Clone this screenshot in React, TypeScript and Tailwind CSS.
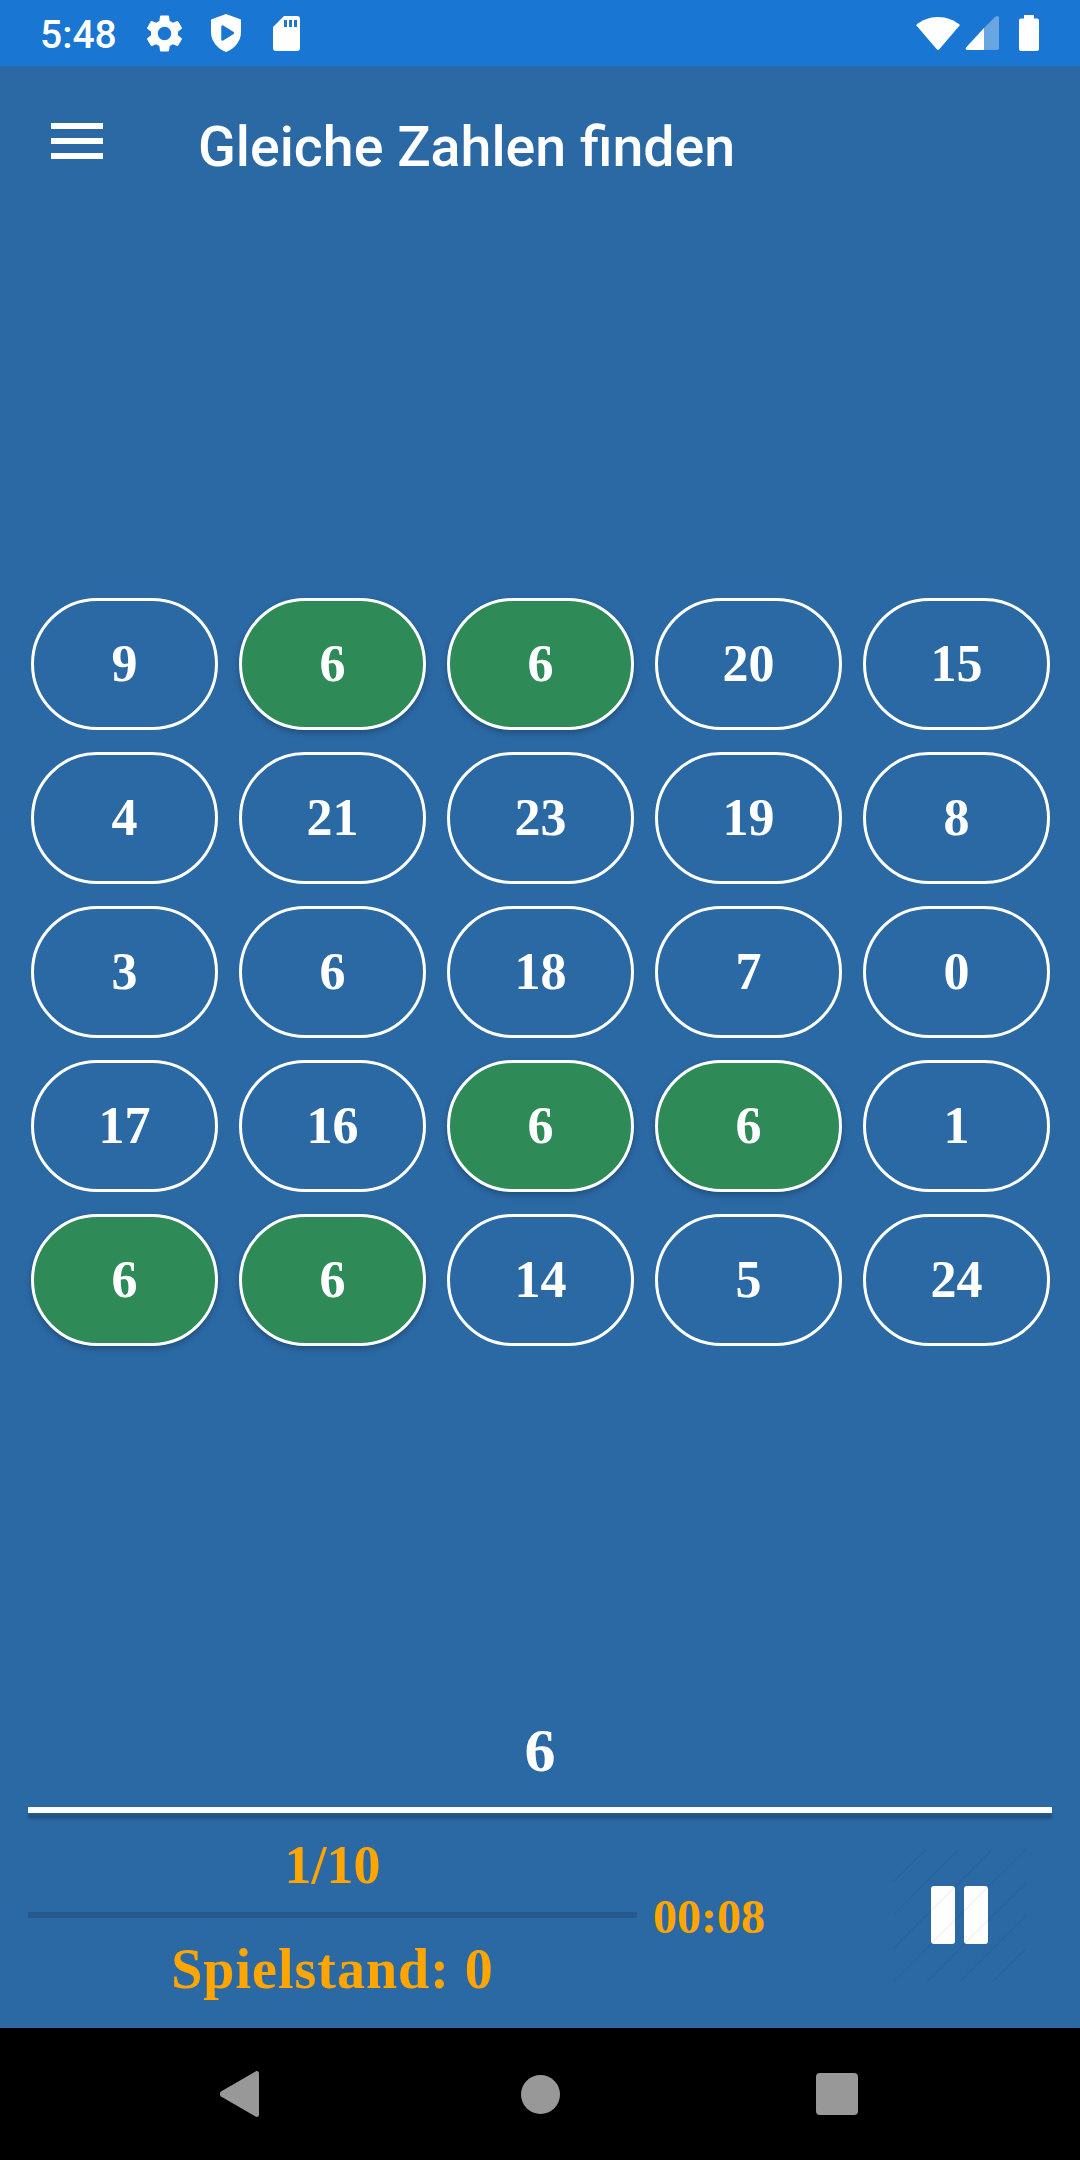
import React from 'react';

const serif = "font-['Liberation_Serif',serif] font-bold";

const cells: { n: number; on?: boolean }[] = [
  { n: 9 }, { n: 6, on: true }, { n: 6, on: true }, { n: 20 }, { n: 15 },
  { n: 4 }, { n: 21 }, { n: 23 }, { n: 19 }, { n: 8 },
  { n: 3 }, { n: 6 }, { n: 18 }, { n: 7 }, { n: 0 },
  { n: 17 }, { n: 16 }, { n: 6, on: true }, { n: 6, on: true }, { n: 1 },
  { n: 6, on: true }, { n: 6, on: true }, { n: 14 }, { n: 5 }, { n: 24 },
];

function StatusBar() {
  return (
    <div className="h-[66px] shrink-0 bg-[#1976d2] flex items-center text-white">
      <span className="ml-[40px] mt-[4px] w-[75px] text-[39px] leading-none font-medium whitespace-nowrap font-['Roboto',sans-serif]">5:48</span>
      <svg className="ml-[27px]" width="45" height="45" viewBox="0 0 24 24" fill="#fff">
        <path d="M19.14 12.94c.04-.3.06-.61.06-.94s-.02-.64-.07-.94l2.03-1.58a.49.49 0 0 0 .12-.61l-1.92-3.32a.49.49 0 0 0-.59-.22l-2.39.96a7 7 0 0 0-1.62-.94l-.36-2.54a.48.48 0 0 0-.48-.41h-3.84a.47.47 0 0 0-.47.41l-.36 2.54c-.59.24-1.13.57-1.62.94l-2.39-.96a.49.49 0 0 0-.59.22L2.74 8.87a.48.48 0 0 0 .12.61l2.03 1.58c-.05.3-.09.63-.09.94s.02.64.07.94l-2.03 1.58a.49.49 0 0 0-.12.61l1.92 3.32c.12.22.37.29.59.22l2.39-.96c.5.38 1.03.7 1.62.94l.36 2.54c.05.24.24.41.48.41h3.84c.24 0 .44-.17.47-.41l.36-2.54c.59-.24 1.13-.56 1.62-.94l2.39.96c.22.08.47 0 .59-.22l1.92-3.32a.48.48 0 0 0-.12-.61l-2.01-1.58zM12 15.6A3.6 3.6 0 1 1 12 8.4a3.600 3.600 0 0 1 0 7.200z" />
      </svg>
      <svg className="ml-[23px]" width="32" height="38" viewBox="0 0 32 38">
        <path fill="#fff" d="M16 0 31 5.500V18c0 9-6 16.500-15 20C7 34.500 1 27 1 18V5.500z" />
        <path fill="#1976d2" stroke="#1976d2" strokeWidth="2.500" strokeLinejoin="round" d="M12.500 12.500v13l10.500-6.500z" />
      </svg>
      <svg className="ml-[31px]" width="27" height="35" viewBox="0 0 27 35">
        <path fill="#fff" fillRule="evenodd" d="M11 0h13a3 3 0 0 1 3 3v29a3 3 0 0 1-3 3H3a3 3 0 0 1-3-3V11zM11 4v7h3V4zM16 4v7h3V4zM21 4v7h3V4z" />
      </svg>
      <div className="flex-1" />
      <svg width="44" height="33" viewBox="0 0 44 33">
        <path fill="#fff" d="M0 8C6 3 13.500 0 22 0s16 3 22 8L23.500 32a2 2 0 0 1-3 0z" />
      </svg>
      <svg className="ml-[5px]" width="34" height="34" viewBox="0 0 34 34">
        <path fill="#fff" fillOpacity="0.35" d="M32 0a2 2 0 0 1 2 2v30a2 2 0 0 1-2 2H19V12L30 1z" />
        <path fill="#fff" d="M19 12v22H2a1.500 1.500 0 0 1-1-2.500z" />
      </svg>
      <svg className="ml-[20px] mr-[41px]" width="20" height="36" viewBox="0 0 20 36">
        <path fill="#fff" d="M5 0h10v3.500h3a2 2 0 0 1 2 2V34a2 2 0 0 1-2 2H2a2 2 0 0 1-2-2V5.500a2 2 0 0 1 2-2h3z" />
      </svg>
    </div>
  );
}

function PauseButton() {
  const lines = [];
  for (let y = 0; y < 4; y++) {
    for (let x = 0; x < 4; x++) {
      lines.push(<line key={`${x}-${y}`} x1={x * 33.25} y1={(y + 1) * 33.25} x2={(x + 1) * 33.25} y2={y * 33.25} />);
    }
  }
  return (
    <div className="relative w-[133px] h-[133px] mb-[3px] flex items-center justify-center">
      <div className="flex gap-[9px]">
        <div className="w-[24px] h-[58px] rounded-[3px] bg-white" />
        <div className="w-[24px] h-[58px] rounded-[3px] bg-white" />
      </div>
      <svg className="absolute inset-0" width="133" height="133" viewBox="0 0 133 133" stroke="#000" strokeOpacity="0.06" strokeWidth="1.200">
        {lines}
      </svg>
    </div>
  );
}

export default function App() {
  return (
    <div className="w-[1080px] h-[2160px] flex flex-col bg-[#2b69a5] overflow-hidden">
      <StatusBar />

      <header className="h-[160px] shrink-0 flex items-center pb-[10px] text-white">
        <div className="ml-[51px] w-[52px] flex flex-col gap-[9px]">
          <div className="h-[6px] bg-white" />
          <div className="h-[6px] bg-white" />
          <div className="h-[6px] bg-white" />
        </div>
        <h1 className="ml-[95px] mt-[13px] text-[55.500px] leading-none font-medium font-['Roboto',sans-serif]">Gleiche Zahlen finden</h1>
      </header>

      <div className="mt-[372px] ml-[31px] mr-[30px] grid grid-cols-5 gap-x-[21px] gap-y-[22px]">
        {cells.map((c, i) => (
          <div
            key={i}
            className={`h-[132px] rounded-full border-[3px] border-white flex items-center justify-center text-white text-[52px] ${serif} ${c.on ? 'bg-[#2e8b57] shadow-[0_3px_6px_rgba(0,0,0,0.25)]' : ''}`}
          >
            {c.n}
          </div>
        ))}
      </div>

      <div className={`mt-[373px] h-[62px] text-center text-white text-[62px] leading-none ${serif}`}>6</div>

      <div className="mt-[26px] mx-[28px] h-[6px] bg-white shadow-[0_6px_3px_rgba(0,0,0,0.22)]" />

      <div className="flex-1 flex items-center pb-[8px]">
        <div className="self-start ml-[28px] mt-[25px] w-[609px] flex flex-col items-center">
          <div className={`text-[54px] leading-none text-[#ffa500] ${serif}`}>1/10</div>
          <div className="w-full h-[6px] mt-[20px] mb-[23px] bg-[#265a8e]" />
          <div className={`text-[56px] leading-none tracking-[1px] text-[#ffa500] ${serif}`}>Spielstand: 0</div>
        </div>
        <div className={`ml-[16px] text-[48px] leading-none text-[#ffa500] ${serif}`}>00:08</div>
        <div className="ml-[128px]"><PauseButton /></div>
      </div>

      <nav className="h-[132px] shrink-0 bg-black flex items-center">
        <svg className="ml-[220px]" width="40" height="46" viewBox="0 0 40 46">
          <path fill="#989898" d="M1 20.500 35.500.500C37.500-.500 39 .5 39 2.500v41c0 2-1.500 3-3.500 2L1 25.500c-1.500-1-1.500-4 0-5z" />
        </svg>
        <div className="ml-[261px] w-[39px] h-[39px] rounded-full bg-[#989898]" />
        <div className="ml-[256px] w-[42px] h-[42px] rounded-[4px] bg-[#989898]" />
      </nav>
    </div>
  );
}
